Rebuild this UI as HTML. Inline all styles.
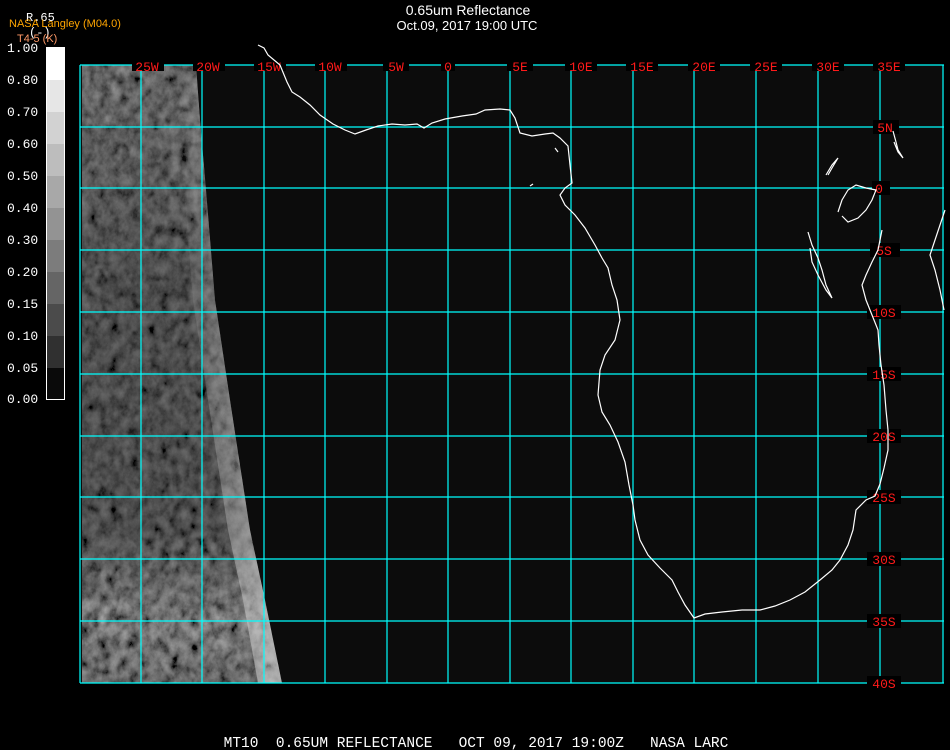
<!DOCTYPE html>
<html><head><meta charset="utf-8"><style>
html,body{margin:0;padding:0;background:#000;width:950px;height:750px;overflow:hidden}
svg{position:absolute;left:0;top:0}
</style></head><body>
<svg width="950" height="750" viewBox="0 0 950 750" xmlns="http://www.w3.org/2000/svg">
<defs>
<filter id="n" x="0" y="0" width="100%" height="100%">
<feTurbulence type="fractalNoise" baseFrequency="0.1 0.08" numOctaves="5" seed="7" result="t"/>
<feColorMatrix in="t" type="matrix" values="0.33 0.33 0.33 0 0  0.33 0.33 0.33 0 0  0.33 0.33 0.33 0 0  0 0 0 0 1" result="g"/>
<feComponentTransfer in="g"><feFuncR type="linear" slope="1.9" intercept="-0.55"/><feFuncG type="linear" slope="1.9" intercept="-0.55"/><feFuncB type="linear" slope="1.9" intercept="-0.55"/></feComponentTransfer>
</filter>
<clipPath id="c"><polygon points="82,65 196,65 200,120 206,190 215,300 230,400 250,530 265,600 282,683 82,683"/></clipPath>
<linearGradient id="e" x1="0" x2="1" y1="0" y2="0"><stop offset="0" stop-color="#fff" stop-opacity="0"/><stop offset="1" stop-color="#ddd" stop-opacity="0.6"/></linearGradient>
<linearGradient id="v" x1="0" x2="0" y1="0" y2="1"><stop offset="0" stop-color="#000" stop-opacity="0.4"/><stop offset="0.35" stop-color="#000" stop-opacity="0.55"/><stop offset="0.75" stop-color="#000" stop-opacity="0.55"/><stop offset="0.9" stop-color="#000" stop-opacity="0.3"/><stop offset="1" stop-color="#000" stop-opacity="0.4"/></linearGradient>
</defs>
<rect x="0" y="0" width="950" height="750" fill="#000"/>
<rect x="80" y="65" width="864" height="618" fill="#0c0c0c"/>
<g clip-path="url(#c)">
<rect x="80" y="65" width="210" height="620" filter="url(#n)"/>
<rect x="80" y="65" width="210" height="620" fill="url(#v)"/>
<polygon points="178,65 196,65 200,120 206,190 215,300 230,400 250,530 265,600 282,683 258,683 243,600 228,530 208,400 193,300 184,190 178,120" fill="url(#e)"/>
</g>
<!-- grid -->
<g stroke="#00ffff" stroke-width="1.2" fill="none">
<path d="M141,65V683M202,65V683M264,65V683M325,65V683M387,65V683M448,65V683M510,65V683M571,65V683M633,65V683M694,65V683M756,65V683M818,65V683M880,65V683M943,65V683M80,65V683"/>
<path d="M80,65H944M80,127H944M80,188H944M80,250H944M80,312H944M80,374H944M80,436H944M80,497H944M80,559H944M80,621H944M80,683H944"/>
</g>
<!-- label backgrounds -->
<g fill="#000">
<rect x="132" y="59" width="32" height="12"/><rect x="193" y="59" width="32" height="12"/><rect x="254" y="59" width="32" height="12"/><rect x="315" y="59" width="32" height="12"/><rect x="383" y="59" width="26" height="12"/><rect x="441" y="59" width="14" height="12"/><rect x="507" y="59" width="26" height="12"/><rect x="565" y="59" width="32" height="12"/><rect x="626" y="59" width="32" height="12"/><rect x="688" y="59" width="32" height="12"/><rect x="750" y="59" width="32" height="12"/><rect x="812" y="59" width="32" height="12"/><rect x="873" y="59" width="32" height="12"/>
<rect x="873" y="120" width="26" height="14"/><rect x="872" y="181" width="18" height="14"/><rect x="870" y="243" width="30" height="14"/><rect x="867" y="305" width="34" height="14"/><rect x="867" y="367" width="34" height="14"/><rect x="867" y="429" width="34" height="14"/><rect x="867" y="490" width="34" height="14"/><rect x="867" y="552" width="34" height="14"/><rect x="867" y="614" width="34" height="14"/><rect x="867" y="676" width="34" height="14"/>
</g>
<g fill="#ff1a1a" font-family="Liberation Mono, monospace" font-size="13" text-anchor="middle">
<text x="147" y="71">25W</text><text x="208" y="71">20W</text><text x="269" y="71">15W</text><text x="330" y="71">10W</text><text x="396" y="71">5W</text><text x="448" y="71">0</text><text x="520" y="71">5E</text><text x="581" y="71">10E</text><text x="642" y="71">15E</text><text x="704" y="71">20E</text><text x="766" y="71">25E</text><text x="828" y="71">30E</text><text x="889" y="71">35E</text>
<text x="885" y="132">5N</text><text x="879" y="193">0</text><text x="884" y="255">5S</text><text x="884" y="317">10S</text><text x="884" y="379">15S</text><text x="884" y="441">20S</text><text x="884" y="502">25S</text><text x="884" y="564">30S</text><text x="884" y="626">35S</text><text x="884" y="688">40S</text>
</g>
<!-- coastline -->
<g stroke="#fff" stroke-width="1.2" fill="none">
<polyline points="258,45 264,48 268,55 280,65 287,82 292,92 300,97 310,105 320,115 333,124 345,130 355,134 366,130 378,126 392,124 405,125 417,124 424,128 432,123 445,119 462,116 476,114 485,110 500,109 510,110 515,118 520,133 532,136 545,134 553,133 560,138 568,146 570,165 572,183 565,188 560,195 565,205 575,215 585,228 595,245 602,258 608,268 612,285 617,300 620,320 615,340 605,355 600,370 598,395 602,412 610,425 618,442 625,462 629,485 633,505 635,520 640,540 648,555 660,568 672,580 678,592 685,605 694,618 705,614 722,612 742,610 760,610 775,606 790,600 805,592 820,580 832,570 840,560 848,545 853,530 856,510 866,500 875,496 880,484 884,468 888,450 888,430 886,410 884,385 881,365 879,345 878,330 872,315 866,300 862,285 866,275 872,262 878,250 882,230"/>
<polyline points="945,210 940,225 935,240 930,255 935,270 940,290 944,310"/>
<polyline points="808,232 812,245 818,258 822,270 826,285 832,298 826,290 818,275 812,262 810,248"/>
<polyline points="838,212 842,200 848,190 856,185 866,188 876,190 872,200 866,210 858,218 848,222 842,216"/>
<polyline points="826,175 832,165 838,158 832,168 828,175"/>
<polyline points="893,131 896,142 898,150 903,158 898,152 894,142"/>
<polyline points="555,148 558,152"/>
<polyline points="530,186 533,184"/>
</g>
<!-- legend -->
<g>
<rect x="46" y="47" width="19" height="353" fill="#fff"/>
<rect x="47" y="80" width="17" height="32" fill="#e6e6e6"/>
<rect x="47" y="112" width="17" height="32" fill="#d2d2d2"/>
<rect x="47" y="144" width="17" height="32" fill="#bdbdbd"/>
<rect x="47" y="176" width="17" height="32" fill="#a8a8a8"/>
<rect x="47" y="208" width="17" height="32" fill="#939393"/>
<rect x="47" y="240" width="17" height="32" fill="#7c7c7c"/>
<rect x="47" y="272" width="17" height="32" fill="#656565"/>
<rect x="47" y="304" width="17" height="32" fill="#4b4b4b"/>
<rect x="47" y="336" width="17" height="32" fill="#303030"/>
<rect x="47" y="368" width="17" height="31" fill="#0a0a0a"/>
</g>
<g fill="#fff" font-family="Liberation Mono, monospace" font-size="13">
<text x="7" y="52">1.00</text><text x="7" y="84">0.80</text><text x="7" y="116">0.70</text><text x="7" y="148">0.60</text><text x="7" y="180">0.50</text><text x="7" y="212">0.40</text><text x="7" y="244">0.30</text><text x="7" y="276">0.20</text><text x="7" y="308">0.15</text><text x="7" y="340">0.10</text><text x="7" y="372">0.05</text><text x="7" y="403">0.00</text>
<text x="26" y="21" font-size="12">R.65</text><text x="29" y="36" font-size="12">(-)</text>
</g>
<text x="9" y="27" fill="#ffa500" font-family="Liberation Sans, sans-serif" font-size="11">NASA Langley (M04.0)</text>
<text x="17" y="42" fill="#ff9966" font-family="Liberation Sans, sans-serif" font-size="11">T4-5 (K)</text>
<g fill="#fff" font-family="Liberation Sans, sans-serif" font-size="14" text-anchor="middle">
<text x="468" y="15">0.65um Reflectance</text>
<text x="467" y="30" font-size="13">Oct.09, 2017 19:00 UTC</text>
</g>
<text x="476" y="747" fill="#fff" font-family="Liberation Mono, monospace" font-size="14.5" text-anchor="middle" xml:space="preserve">MT10  0.65UM REFLECTANCE   OCT 09, 2017 19:00Z   NASA LARC</text>
</svg>
</body></html>
